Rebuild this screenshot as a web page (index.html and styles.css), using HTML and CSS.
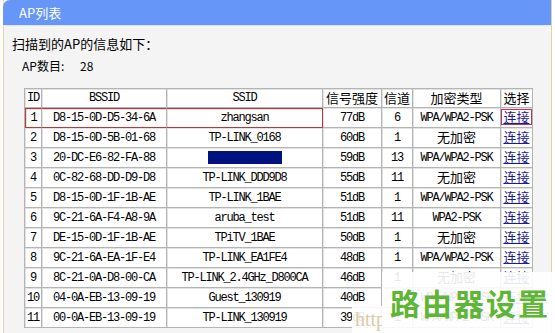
FILE: index.html
```html
<!DOCTYPE html>
<html lang="zh-CN">
<head>
    <meta charset="UTF-8">
    <title>AP列表</title>
    <link rel="stylesheet" href="styles.css">
</head>
<body>
    <div class="panel">
        <div class="panel-head">AP列表</div>
        <div class="panel-body">
            <p class="intro">扫描到的AP的信息如下：</p>
            <p class="count"><span class="count-label">AP数目:</span>28</p>

            <table class="ap-table">
                <colgroup>
                    <col style="width:17px">
                    <col style="width:125px">
                    <col style="width:156px">
                    <col style="width:59px">
                    <col style="width:31px">
                    <col style="width:88px">
                    <col style="width:32px">
                </colgroup>
                <tr class="head">
                    <td class="mono">ID</td><td class="mono">BSSID</td><td class="mono">SSID</td>
                    <td>信号强度</td><td>信道</td><td>加密类型</td><td>选择</td>
                </tr>
                <tr class="hit">
                    <td>1</td><td>D8-15-0D-D5-34-6A</td><td>zhangsan</td>
                    <td>77dB</td><td>6</td><td>WPA/WPA2-PSK</td><td class="act"><a class="link boxed">连接</a></td>
                </tr>
                <tr>
                    <td>2</td><td>D8-15-0D-5B-01-68</td><td>TP-LINK_0168</td>
                    <td>60dB</td><td>1</td><td class="cn">无加密</td><td class="act"><a class="link">连接</a></td>
                </tr>
                <tr>
                    <td>3</td><td>20-DC-E6-82-FA-88</td><td><span class="masked"></span></td>
                    <td>59dB</td><td>13</td><td>WPA/WPA2-PSK</td><td class="act"><a class="link">连接</a></td>
                </tr>
                <tr>
                    <td>4</td><td>0C-82-68-DD-D9-D8</td><td>TP-LINK_DDD9D8</td>
                    <td>55dB</td><td>11</td><td class="cn">无加密</td><td class="act"><a class="link">连接</a></td>
                </tr>
                <tr>
                    <td>5</td><td>D8-15-0D-1F-1B-AE</td><td>TP-LINK_1BAE</td>
                    <td>51dB</td><td>1</td><td>WPA/WPA2-PSK</td><td class="act"><a class="link">连接</a></td>
                </tr>
                <tr>
                    <td>6</td><td>9C-21-6A-F4-A8-9A</td><td>aruba_test</td>
                    <td>51dB</td><td>11</td><td>WPA2-PSK</td><td class="act"><a class="link">连接</a></td>
                </tr>
                <tr>
                    <td>7</td><td>DE-15-0D-1F-1B-AE</td><td>TPiTV_1BAE</td>
                    <td>50dB</td><td>1</td><td class="cn">无加密</td><td class="act"><a class="link">连接</a></td>
                </tr>
                <tr>
                    <td>8</td><td>9C-21-6A-EA-1F-E4</td><td>TP-LINK_EA1FE4</td>
                    <td>48dB</td><td>1</td><td>WPA/WPA2-PSK</td><td class="act"><a class="link">连接</a></td>
                </tr>
                <tr>
                    <td>9</td><td>8C-21-0A-D8-00-CA</td><td>TP-LINK_2.4GHz_D800CA</td>
                    <td>46dB</td><td>1</td><td class="cn">无加密</td><td class="act"><a class="link">连接</a></td>
                </tr>
                <tr>
                    <td>10</td><td>04-0A-EB-13-09-19</td><td>Guest_130919</td>
                    <td>40dB</td><td>1</td><td>WPA/WPA2-PSK</td><td class="act"><a class="link">连接</a></td>
                </tr>
                <tr>
                    <td>11</td><td>00-0A-EB-13-09-19</td><td>TP-LINK_130919</td>
                    <td>39dB</td><td>1</td><td>WPA/WPA2-PSK</td><td class="act"><a class="link">连接</a></td>
                </tr>
            </table>
        </div>
    </div>

    <div class="mark">
        <span class="mark-url">http</span>
        <span class="mark-text">路由器设置</span>
    </div>
</body>
</html>
```

FILE: styles.css
```css
body {
    margin: 0;
    background: #ffffff;
    font-family: "Noto Sans CJK SC", "DejaVu Sans", sans-serif;
    color: #000;
    overflow: hidden;
}
.panel {
    margin-left: 3px;
    width: 547px;
    height: 400px;
    background: #f4f4f4;
    border-left: 1px solid #edd3a6;
    border-right: 1px solid #e6cfa4;
}
.panel-head {
    height: 25px;
    line-height: 25px;
    margin-left: -1px;
    padding-left: 16px;
    background: #6697f8;
    border-top-left-radius: 7px;
    color: #fff;
    font-size: 13px;
    border-bottom: 1px solid #e0e8f8;
}
.panel-body {
    padding: 7px 0 0 8px;
}
.intro {
    margin: 0;
    font-size: 13px;
    line-height: 22px;
}
.count {
    margin: 0;
    padding-left: 10px;
    font-size: 12px;
    line-height: 22px;
}
.count-label {
    display: inline-block;
    width: 58px;
}
.ap-table {
    margin: 11px 0 0 12px;
    width: 508px;
    table-layout: fixed;
    border-collapse: separate;
    border-spacing: 0;
    border-top: 1px solid #b4b4b4;
    border-left: 1px solid #b4b4b4;
    background: #fff;
}
.ap-table td {
    height: 19px;
    padding: 0;
    line-height: 18px;
    text-align: center;
    white-space: nowrap;
    overflow: hidden;
    border-right: 1px solid #b4b4b4;
    border-bottom: 1px solid #b4b4b4;
    box-shadow: inset 1px 1px 0 #e2e2e2;
    font-family: "Liberation Mono", monospace;
    font-size: 12px;
    letter-spacing: -1.2px;
}
.ap-table tr.head td {
    height: 18px;
    font-family: "Noto Sans CJK SC", sans-serif;
    font-size: 13px;
    letter-spacing: 0;
}
.ap-table tr.head td.mono {
    font-family: "Liberation Mono", monospace;
    font-size: 12px;
    letter-spacing: -1.2px;
}
.ap-table td.cn,
.ap-table td.act {
    height: 17px;
    padding-bottom: 2px;
    line-height: 16px;
    font-family: "Noto Sans CJK SC", sans-serif;
    font-size: 13px;
    letter-spacing: 0;
}
.ap-table td.act {
    overflow: visible;
}
.ap-table tr.hit td:nth-child(-n+3) {
    height: 18px;
    border-top: 1px solid #b53a3a;
    border-bottom: 1px solid #b53a3a;
}
.ap-table tr.hit td:first-child {
    border-left: 1px solid #b53a3a;
}
.ap-table tr.hit td:nth-child(3) {
    border-right: 1px solid #b53a3a;
}
.link {
    color: #1c1c8c;
    text-decoration: underline;
}
.boxed {
    display: inline-block;
    padding: 0 1px;
    line-height: 14px;
    vertical-align: middle;
    border: 1px solid #b53a55;
    background: #fff8fa;
}
.masked {
    display: inline-block;
    width: 74px;
    height: 13px;
    vertical-align: middle;
    background: #001280;
}
.mark {
    position: absolute;
    left: 352px;
    top: 272px;
    width: 203px;
    height: 61px;
}
.mark::before {
    content: "";
    position: absolute;
    left: 30px;
    top: 0;
    right: 0;
    bottom: 0;
    background: rgba(255, 255, 255, 0.9);
}
.mark-url {
    position: absolute;
    left: 0;
    top: 34px;
    width: 30px;
    height: 27px;
    background: rgba(255, 255, 255, 0.9);
    color: #dccaa6;
    font-family: "Liberation Serif", serif;
    font-size: 20px;
    line-height: 27px;
    overflow: hidden;
    padding-left: 3px;
    box-sizing: border-box;
}
.mark-text {
    position: absolute;
    left: 38px;
    top: 12px;
    color: #5fb535;
    font-family: "Noto Sans CJK SC", sans-serif;
    font-weight: 700;
    font-size: 30px;
    line-height: 36px;
    letter-spacing: 2px;
}
```
